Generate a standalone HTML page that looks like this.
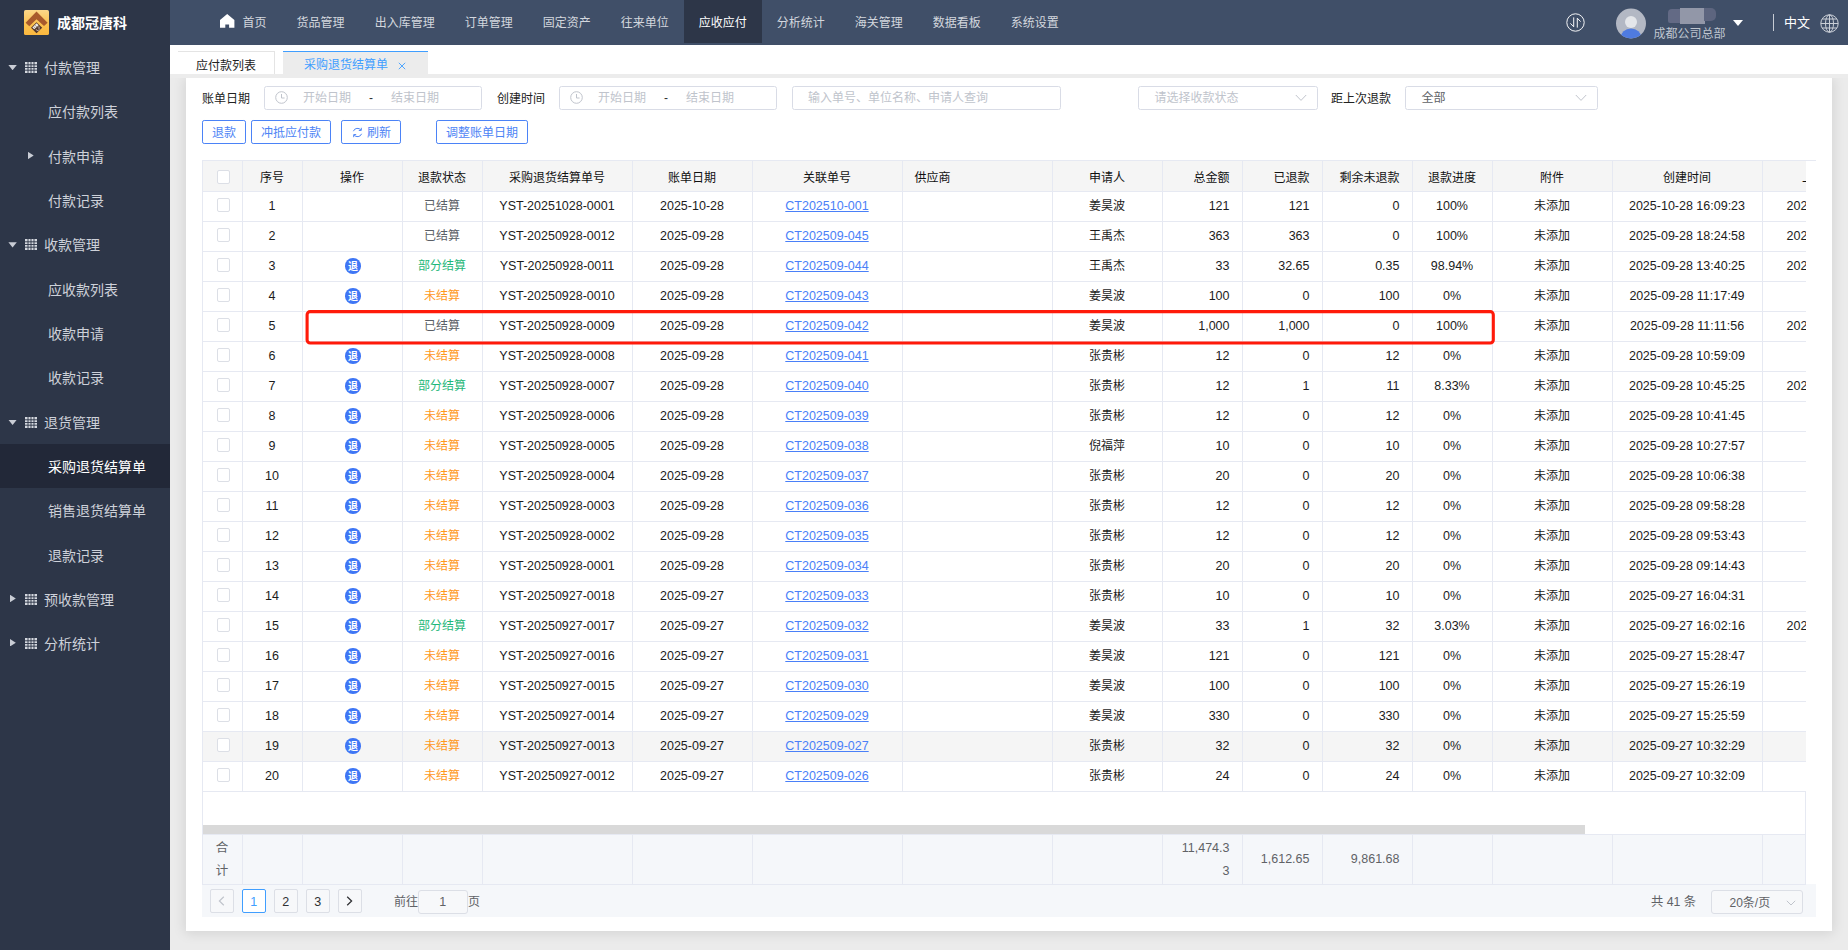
<!DOCTYPE html>
<html lang="zh-CN">
<head>
<meta charset="utf-8">
<title>采购退货结算单</title>
<style>
*{box-sizing:border-box;margin:0;padding:0}
html,body{width:1848px;height:950px;overflow:hidden;background:#ebebeb}
body{font-family:"Liberation Sans","Noto Sans CJK SC",sans-serif;font-size:12px;color:#222;position:relative}
i{font-style:normal}
.abs{position:absolute}

/* ---------- sidebar ---------- */
#side{position:absolute;left:0;top:0;width:170px;height:950px;background:#2d3648;overflow:hidden}
#logo{position:absolute;left:24px;top:9.8px;width:25px;height:25px}
#brand{position:absolute;left:57px;top:1.3px;height:45px;line-height:45px;font-size:14px;font-weight:bold;color:#fff;white-space:nowrap;letter-spacing:0}
#menu{position:absolute;left:0;top:45px;width:170px}
.mi{position:relative;height:44.33px;line-height:44.33px;font-size:14px;color:#cdd1d9;white-space:nowrap}
.mi.g .t{position:absolute;left:44px;top:1px}
.mi.s .t{position:absolute;left:48px;top:1px}
.mi.active{background:#222838;color:#fff}
.mi .grid{position:absolute;left:25px;top:17px}
.arr{position:absolute;background:#c9cdd5}
.arr.open{left:8.4px;top:20px;width:8.4px;height:5.3px;clip-path:polygon(0 0,100% 0,50% 100%)}
.arr.closed{left:10px;top:17.7px;width:5.8px;height:7.5px;clip-path:polygon(0 0,100% 50%,0 100%)}
.arr.sub.closed{left:27.9px;top:18.1px}

/* ---------- header ---------- */
#head{position:absolute;left:170px;top:0;width:1678px;height:44.5px;background:#404f68}
#nav{position:absolute;left:34.6px;top:0;height:45px;display:flex}
.ni{height:45px;line-height:47.4px;padding:0 15px;font-size:12px;color:#d3d7de;white-space:nowrap}
.ni.on{background:#2d3648;color:#fff;height:42.7px}
.ni.home{position:relative;padding-left:38px}
.ni.home svg{position:absolute;left:15.8px;top:13.9px}

/* ---------- tabs ---------- */
#tabs{position:absolute;left:170px;top:45px;width:1678px;height:29px;background:#fff;z-index:3}
#tabgap{position:absolute;left:170px;top:74px;width:1678px;height:4px;background:#ececec;z-index:3}
.tab{position:absolute;top:6px;height:23px;line-height:28px;font-size:12px;white-space:nowrap}
#tab1{left:8px;width:97px;border-top:1px solid #e4e4e4;border-right:1px solid #e4e4e4;color:#222;padding-left:18px}
#tab2{left:113px;width:145px;border-top:1.2px solid #409eff;background:#ececec;color:#409eff;padding-left:21px;line-height:27px}
#tab2 .x{position:absolute;left:115px;top:10px}

/* ---------- panel ---------- */
#panel{position:absolute;left:186px;top:78px;width:1646px;height:852.5px;background:#fff;box-shadow:0 1px 12px 1px rgba(0,0,0,.11)}
.lbl{position:absolute;height:24px;line-height:26px;font-size:12px;color:#222;white-space:nowrap}
.inp{position:absolute;height:23.5px;border:1px solid #d9dce6;border-radius:2.5px;background:#fff;font-size:12px;color:#c0c4cc;white-space:nowrap}
.inp span{position:absolute;top:0;line-height:23px}
.btn{position:absolute;top:120px;height:23.8px;line-height:24.4px;border:1px solid #4b83f7;border-radius:2.2px;color:#4d84f5;font-size:12px;text-align:center;white-space:nowrap;background:#fff}

/* ---------- table ---------- */
#twrap{position:absolute;left:202px;top:161px;width:1604px;height:631px;overflow:hidden;border-left:1px solid #e6e9f2}
#tline{position:absolute;left:202px;top:160px;width:1614px;height:1px;background:#e6e9f2}
table.tb{border-collapse:separate;border-spacing:0;table-layout:fixed;width:1710px;position:absolute;left:-0.5px;top:0}
.tb th,.tb td{height:30px;box-sizing:border-box;border-right:1px solid #e6e9f2;border-bottom:1px solid #e6e9f2;font-size:12px;font-weight:normal;white-space:nowrap;overflow:hidden;padding:0;line-height:27px;padding-top:0.5px;vertical-align:top}
.tb th{background:#f5f5f5;color:#111;height:31px;line-height:26px;padding-top:3.5px;vertical-align:top}
.tb td{color:#1c1c1c}
.tb .c{text-align:center}
.tb .l{text-align:left;padding-left:12px}
.tb .r{text-align:right;padding-right:12px}
.tb .n{font-size:12.5px}
.tb .last{text-align:left;overflow:hidden}
.tb td.last span{margin-left:24px}
.tb th.last span{margin-left:39.6px}
.tb tr.hov td{background:#f5f5f5}
.cb{display:block;width:13.5px;height:13.5px;border:1px solid #dcdfe6;border-radius:2px;background:#fff;margin:5.5px 0 0 14px}
th .cb{margin-top:5.5px}
.op{display:inline-block;width:15.6px;height:15.6px;border-radius:50%;background:#3f76f5;color:#fff;font-size:10px;line-height:17.6px;overflow:hidden;text-align:center;vertical-align:middle;position:relative;top:-0.5px;left:1px;font-weight:bold}
.st0{color:#5a5e66!important}
.st1{color:#1fb87a!important}
.st2{color:#ff991e!important}
.tb a{color:#4a80f8;text-decoration:underline}

#tbot{position:absolute;left:202px;top:792px;width:1604px;height:92px;border-left:1px solid #e6e9f2;border-right:1px solid #e6e9f2}
#sbar{position:absolute;left:203px;top:825px;width:1382px;height:9.3px;z-index:3;background:#d9d9d9}
#fwrap{z-index:2;position:absolute;left:202px;top:834px;width:1604px;height:50.5px;overflow:hidden;border-left:1px solid #e6e9f2;border-right:1px solid #e6e9f2;background:#f5f7fa}
.tb.ft td{vertical-align:middle;height:50.5px;background:#f5f7fa;color:#606266;border-bottom:1px solid #e6e9f2;border-top:1px solid #e6e9f2;line-height:23px;white-space:normal;padding-top:1px}
.tb.ft td.r{padding-right:12px}
.hj{display:inline-block;line-height:22.5px}
.wr{display:inline-block;line-height:23px;text-align:right}

/* ---------- pagination ---------- */
#pager{position:absolute;left:202px;top:884px;width:1614px;height:33px;background:#f5f7fa}
.pb{position:absolute;top:5.2px;width:23.5px;height:23.5px;border:1px solid #dcdfe6;border-radius:2px;background:#f7f8fa;text-align:center;line-height:24.5px;font-size:12.5px;color:#303133}
.pb.on{border-color:#409eff;color:#409eff;background:#fff}

#blur{filter:blur(0.7px)}
#blur i{position:absolute;top:0;height:100%}

</style>
</head>
<body>
<div id="side">
  <svg id="logo" viewBox="0 0 25 25">
    <defs><linearGradient id="lg" x1="0" y1="0" x2="0" y2="1"><stop offset="0" stop-color="#fbd78a"/><stop offset="0.55" stop-color="#fbc250"/><stop offset="1" stop-color="#fbb83f"/></linearGradient></defs>
    <rect x="0" y="0" width="25" height="25" rx="1.6" fill="url(#lg)"/>
    <path d="M12.5 1.5 L23.6 12.7 L20 16.1 L12.5 9.3 L5.3 16.2 L1.6 12.7 Z" fill="#a85a2c"/>
    <path d="M12.5 12.2 L18.2 17.7 L12.5 23.2 L7 17.7 Z" fill="#55382a"/>
    <path d="M8.3 17.4 L12.6 13.3 L14.6 15.2 L10.3 19.3 Z" fill="#f1ede8"/>
    <path d="M9.6 16.5 L11.7 18.5 M11 15.2 L13.1 17.2" stroke="#6b5a50" stroke-width="0.55"/>
    <path d="M12.2 19.2 a1.5 1.5 0 1 0 2.6 -1.2 M13.6 16.9 L15.9 17.3" stroke="#cfc4bb" stroke-width="0.8" fill="none"/>
  </svg>
  <div id="brand">成都冠唐科</div>
  <div id="menu">
<div class="mi g"><i class="arr open"></i><svg class="grid" width="12" height="11" viewBox="0 0 12 11"><rect x="0" y="0" width="12" height="11" fill="#d4d8df"/><path d="M0 2.8H12M0 5.5H12M0 8.2H12M3 0V11M6 0V11M9 0V11" stroke="#2d3548" stroke-width="0.9"/></svg><span class="t">付款管理</span></div>
<div class="mi s"><span class="t">应付款列表</span></div>
<div class="mi s"><i class="arr sub closed"></i><span class="t">付款申请</span></div>
<div class="mi s"><span class="t">付款记录</span></div>
<div class="mi g"><i class="arr open"></i><svg class="grid" width="12" height="11" viewBox="0 0 12 11"><rect x="0" y="0" width="12" height="11" fill="#d4d8df"/><path d="M0 2.8H12M0 5.5H12M0 8.2H12M3 0V11M6 0V11M9 0V11" stroke="#2d3548" stroke-width="0.9"/></svg><span class="t">收款管理</span></div>
<div class="mi s"><span class="t">应收款列表</span></div>
<div class="mi s"><span class="t">收款申请</span></div>
<div class="mi s"><span class="t">收款记录</span></div>
<div class="mi g"><i class="arr open"></i><svg class="grid" width="12" height="11" viewBox="0 0 12 11"><rect x="0" y="0" width="12" height="11" fill="#d4d8df"/><path d="M0 2.8H12M0 5.5H12M0 8.2H12M3 0V11M6 0V11M9 0V11" stroke="#2d3548" stroke-width="0.9"/></svg><span class="t">退货管理</span></div>
<div class="mi s active"><span class="t">采购退货结算单</span></div>
<div class="mi s"><span class="t">销售退货结算单</span></div>
<div class="mi s"><span class="t">退款记录</span></div>
<div class="mi g"><i class="arr closed"></i><svg class="grid" width="12" height="11" viewBox="0 0 12 11"><rect x="0" y="0" width="12" height="11" fill="#d4d8df"/><path d="M0 2.8H12M0 5.5H12M0 8.2H12M3 0V11M6 0V11M9 0V11" stroke="#2d3548" stroke-width="0.9"/></svg><span class="t">预收款管理</span></div>
<div class="mi g"><i class="arr closed"></i><svg class="grid" width="12" height="11" viewBox="0 0 12 11"><rect x="0" y="0" width="12" height="11" fill="#d4d8df"/><path d="M0 2.8H12M0 5.5H12M0 8.2H12M3 0V11M6 0V11M9 0V11" stroke="#2d3548" stroke-width="0.9"/></svg><span class="t">分析统计</span></div>
  </div>
</div>

<div id="head">
  <div id="nav">
<div class="ni home"><svg width="14.4" height="13.8" viewBox="0 0 14.4 13.8"><path d="M7.2 0 L14.4 5.9 V13.8 H9.1 V10.4 H5.3 V13.8 H0 V5.9 Z" fill="#fff"/></svg><span>首页</span></div>
<div class="ni">货品管理</div>
<div class="ni">出入库管理</div>
<div class="ni">订单管理</div>
<div class="ni">固定资产</div>
<div class="ni">往来单位</div>
<div class="ni on">应收应付</div>
<div class="ni">分析统计</div>
<div class="ni">海关管理</div>
<div class="ni">数据看板</div>
<div class="ni">系统设置</div>
  </div>
  <!-- exchange icon -->
  <svg class="abs" style="left:1395.7px;top:13.3px" width="19" height="19" viewBox="0 0 19 19">
    <circle cx="9.5" cy="9.5" r="8.7" fill="none" stroke="#fff" stroke-width="0.95"/>
    <path d="M7.7 4.4V13.8L4.4 10.4M11.3 14.6V5.2L14.6 8.6" fill="none" stroke="#fff" stroke-width="0.95"/>
  </svg>
  <!-- avatar -->
  <svg class="abs" style="left:1446px;top:7.5px" width="30" height="31" viewBox="0 0 30 31">
    <defs><clipPath id="av"><circle cx="15" cy="15.5" r="15"/></clipPath></defs>
    <circle cx="15" cy="15.5" r="15" fill="#b3b8c4"/>
    <g clip-path="url(#av)">
      <circle cx="15" cy="14" r="6" fill="#e4e6ea"/>
      <ellipse cx="15" cy="30" rx="10.5" ry="9.5" fill="#4f7be0"/>
    </g>
  </svg>
  <div class="abs" id="blur" style="left:1498px;top:7px;width:48px;height:16.5px"><i style="left:0;width:13px;background:#636a85;top:1.5px;height:14px;border-radius:4px 0 0 2px"></i><i style="left:12px;width:24.5px;background:#9297a8;top:1px;height:15.5px"></i><i style="left:36px;width:12px;background:#5d657f;top:1px;height:13px;border-radius:0 5px 5px 0"></i></div>
  <div class="abs" style="left:1483.5px;top:24px;height:20px;line-height:20px;font-size:12px;color:#bfc5cf;white-space:nowrap">成都公司总部</div>
  <i class="abs" style="left:1563px;top:20px;width:0;height:0;border-style:solid;border-width:6px 5.2px 0 5.2px;border-color:#fff transparent transparent transparent"></i>
  <i class="abs" style="left:1602.5px;top:14px;width:1px;height:17px;background:#c6cbd4"></i>
  <div class="abs" style="left:1614px;top:0;height:45px;line-height:46px;font-size:13px;color:#fff;white-space:nowrap">中文</div>
  <svg class="abs" style="left:1649.5px;top:13.5px" width="19" height="19" viewBox="0 0 19 19">
    <g fill="none" stroke="#c9ced6" stroke-width="1">
      <circle cx="9.5" cy="9.5" r="8.7"/>
      <ellipse cx="9.5" cy="9.5" rx="4" ry="8.7"/>
      <path d="M9.5 0.8V18.2M0.8 9.5H18.2M2.2 5H16.8M2.2 14H16.8"/>
    </g>
  </svg>
</div>

<div id="tabs">
  <div class="tab" id="tab1">应付款列表</div>
  <div class="tab" id="tab2">采购退货结算单<svg class="x" width="8" height="8" viewBox="0 0 8 8"><path d="M0.8 0.8L7.2 7.2M7.2 0.8L0.8 7.2" stroke="#409eff" stroke-width="0.9" fill="none"/></svg></div>
</div>

<div id="tabgap"></div>
<div id="panel"></div>

<!-- filters -->
<div class="lbl" style="left:202px;top:86px">账单日期</div>
<div class="inp" style="left:264px;top:86px;width:218px">
  <svg class="abs" style="left:10px;top:4px" width="13" height="13" viewBox="0 0 13 13"><circle cx="6.5" cy="6.5" r="5.8" fill="none" stroke="#c0c4cc" stroke-width="1"/><path d="M6.5 3V7H9.6" fill="none" stroke="#c0c4cc" stroke-width="1"/></svg>
  <span style="left:38px">开始日期</span><span style="left:104px;color:#303133">-</span><span style="left:126px">结束日期</span>
</div>
<div class="lbl" style="left:497px;top:86px">创建时间</div>
<div class="inp" style="left:559px;top:86px;width:218px">
  <svg class="abs" style="left:10px;top:4px" width="13" height="13" viewBox="0 0 13 13"><circle cx="6.5" cy="6.5" r="5.8" fill="none" stroke="#c0c4cc" stroke-width="1"/><path d="M6.5 3V7H9.6" fill="none" stroke="#c0c4cc" stroke-width="1"/></svg>
  <span style="left:38px">开始日期</span><span style="left:104px;color:#303133">-</span><span style="left:126px">结束日期</span>
</div>
<div class="inp" style="left:792px;top:86px;width:269px"><span style="left:15px">输入单号、单位名称、申请人查询</span></div>
<div class="inp" style="left:1138px;top:86px;width:179.5px"><span style="left:15.5px">请选择收款状态</span>
  <svg class="abs" style="left:156px;top:7px" width="12" height="8" viewBox="0 0 12 8"><path d="M0.8 1L6 6.4L11.2 1" fill="none" stroke="#c0c4cc" stroke-width="1"/></svg>
</div>
<div class="lbl" style="left:1331px;top:86px">距上次退款</div>
<div class="inp" style="left:1405px;top:86px;width:193px"><span style="left:15.5px;color:#606266">全部</span>
  <svg class="abs" style="left:169px;top:7px" width="12" height="8" viewBox="0 0 12 8"><path d="M0.8 1L6 6.4L11.2 1" fill="none" stroke="#c0c4cc" stroke-width="1"/></svg>
</div>

<!-- buttons -->
<div class="btn" style="left:202px;width:44px">退款</div>
<div class="btn" style="left:251px;width:80px">冲抵应付款</div>
<div class="btn" style="left:341px;width:60px;text-align:left;padding-left:25px">
  <svg class="abs" style="left:10px;top:6px" width="11" height="11" viewBox="0 0 11 11"><g fill="none" stroke="#4d84f5" stroke-width="1"><path d="M1.4 4.2A4.3 4.3 0 0 1 9 3.2"/><path d="M9.6 6.8A4.3 4.3 0 0 1 2 7.8"/><path d="M9.3 0.8V3.4H6.8"/><path d="M1.7 10.2V7.6H4.2"/></g></svg>刷新</div>
<div class="btn" style="left:436px;width:92px">调整账单日期</div>

<!-- table -->
<div id="tline"></div>
<div id="twrap">
<table class="tb">
<colgroup><col style="width:40px"><col style="width:60px"><col style="width:100px"><col style="width:80px"><col style="width:150px"><col style="width:120px"><col style="width:150px"><col style="width:150px"><col style="width:110px"><col style="width:80px"><col style="width:80px"><col style="width:90px"><col style="width:80px"><col style="width:120px"><col style="width:150px"><col style="width:150px"></colgroup>
<thead><tr>
<th class="c"><i class="cb"></i></th>
<th class="c">序号</th>
<th class="c">操作</th>
<th class="c">退款状态</th>
<th class="c">采购退货结算单号</th>
<th class="c">账单日期</th>
<th class="c">关联单号</th>
<th class="l">供应商</th>
<th class="c">申请人</th>
<th class="r">总金额</th>
<th class="r">已退款</th>
<th class="r">剩余未退款</th>
<th class="c">退款进度</th>
<th class="c">附件</th>
<th class="c">创建时间</th>
<th class="last"><span>上次退款时间</span></th>
</tr></thead><tbody>
<tr>
<td class="c"><i class="cb"></i></td>
<td class="c n">1</td>
<td class="c"></td>
<td class="c st0">已结算</td>
<td class="c n">YST-20251028-0001</td>
<td class="c n">2025-10-28</td>
<td class="c n"><a>CT202510-001</a></td>
<td class="l"></td>
<td class="c">姜昊波</td>
<td class="r n">121</td>
<td class="r n">121</td>
<td class="r n">0</td>
<td class="c n">100%</td>
<td class="c">未添加</td>
<td class="c n">2025-10-28 16:09:23</td>
<td class="last n"><span>2025-10-28 16:09:40</span></td>
</tr>
<tr>
<td class="c"><i class="cb"></i></td>
<td class="c n">2</td>
<td class="c"></td>
<td class="c st0">已结算</td>
<td class="c n">YST-20250928-0012</td>
<td class="c n">2025-09-28</td>
<td class="c n"><a>CT202509-045</a></td>
<td class="l"></td>
<td class="c">王禹杰</td>
<td class="r n">363</td>
<td class="r n">363</td>
<td class="r n">0</td>
<td class="c n">100%</td>
<td class="c">未添加</td>
<td class="c n">2025-09-28 18:24:58</td>
<td class="last n"><span>2025-09-28 18:25:20</span></td>
</tr>
<tr>
<td class="c"><i class="cb"></i></td>
<td class="c n">3</td>
<td class="c"><i class="op">退</i></td>
<td class="c st1">部分结算</td>
<td class="c n">YST-20250928-0011</td>
<td class="c n">2025-09-28</td>
<td class="c n"><a>CT202509-044</a></td>
<td class="l"></td>
<td class="c">王禹杰</td>
<td class="r n">33</td>
<td class="r n">32.65</td>
<td class="r n">0.35</td>
<td class="c n">98.94%</td>
<td class="c">未添加</td>
<td class="c n">2025-09-28 13:40:25</td>
<td class="last n"><span>2025-09-28 13:41:02</span></td>
</tr>
<tr>
<td class="c"><i class="cb"></i></td>
<td class="c n">4</td>
<td class="c"><i class="op">退</i></td>
<td class="c st2">未结算</td>
<td class="c n">YST-20250928-0010</td>
<td class="c n">2025-09-28</td>
<td class="c n"><a>CT202509-043</a></td>
<td class="l"></td>
<td class="c">姜昊波</td>
<td class="r n">100</td>
<td class="r n">0</td>
<td class="r n">100</td>
<td class="c n">0%</td>
<td class="c">未添加</td>
<td class="c n">2025-09-28 11:17:49</td>
<td class="last n"><span></span></td>
</tr>
<tr>
<td class="c"><i class="cb"></i></td>
<td class="c n">5</td>
<td class="c"></td>
<td class="c st0">已结算</td>
<td class="c n">YST-20250928-0009</td>
<td class="c n">2025-09-28</td>
<td class="c n"><a>CT202509-042</a></td>
<td class="l"></td>
<td class="c">姜昊波</td>
<td class="r n">1,000</td>
<td class="r n">1,000</td>
<td class="r n">0</td>
<td class="c n">100%</td>
<td class="c">未添加</td>
<td class="c n">2025-09-28 11:11:56</td>
<td class="last n"><span>2025-09-28 11:12:30</span></td>
</tr>
<tr>
<td class="c"><i class="cb"></i></td>
<td class="c n">6</td>
<td class="c"><i class="op">退</i></td>
<td class="c st2">未结算</td>
<td class="c n">YST-20250928-0008</td>
<td class="c n">2025-09-28</td>
<td class="c n"><a>CT202509-041</a></td>
<td class="l"></td>
<td class="c">张贵彬</td>
<td class="r n">12</td>
<td class="r n">0</td>
<td class="r n">12</td>
<td class="c n">0%</td>
<td class="c">未添加</td>
<td class="c n">2025-09-28 10:59:09</td>
<td class="last n"><span></span></td>
</tr>
<tr>
<td class="c"><i class="cb"></i></td>
<td class="c n">7</td>
<td class="c"><i class="op">退</i></td>
<td class="c st1">部分结算</td>
<td class="c n">YST-20250928-0007</td>
<td class="c n">2025-09-28</td>
<td class="c n"><a>CT202509-040</a></td>
<td class="l"></td>
<td class="c">张贵彬</td>
<td class="r n">12</td>
<td class="r n">1</td>
<td class="r n">11</td>
<td class="c n">8.33%</td>
<td class="c">未添加</td>
<td class="c n">2025-09-28 10:45:25</td>
<td class="last n"><span>2025-09-28 10:46:01</span></td>
</tr>
<tr>
<td class="c"><i class="cb"></i></td>
<td class="c n">8</td>
<td class="c"><i class="op">退</i></td>
<td class="c st2">未结算</td>
<td class="c n">YST-20250928-0006</td>
<td class="c n">2025-09-28</td>
<td class="c n"><a>CT202509-039</a></td>
<td class="l"></td>
<td class="c">张贵彬</td>
<td class="r n">12</td>
<td class="r n">0</td>
<td class="r n">12</td>
<td class="c n">0%</td>
<td class="c">未添加</td>
<td class="c n">2025-09-28 10:41:45</td>
<td class="last n"><span></span></td>
</tr>
<tr>
<td class="c"><i class="cb"></i></td>
<td class="c n">9</td>
<td class="c"><i class="op">退</i></td>
<td class="c st2">未结算</td>
<td class="c n">YST-20250928-0005</td>
<td class="c n">2025-09-28</td>
<td class="c n"><a>CT202509-038</a></td>
<td class="l"></td>
<td class="c">倪福萍</td>
<td class="r n">10</td>
<td class="r n">0</td>
<td class="r n">10</td>
<td class="c n">0%</td>
<td class="c">未添加</td>
<td class="c n">2025-09-28 10:27:57</td>
<td class="last n"><span></span></td>
</tr>
<tr>
<td class="c"><i class="cb"></i></td>
<td class="c n">10</td>
<td class="c"><i class="op">退</i></td>
<td class="c st2">未结算</td>
<td class="c n">YST-20250928-0004</td>
<td class="c n">2025-09-28</td>
<td class="c n"><a>CT202509-037</a></td>
<td class="l"></td>
<td class="c">张贵彬</td>
<td class="r n">20</td>
<td class="r n">0</td>
<td class="r n">20</td>
<td class="c n">0%</td>
<td class="c">未添加</td>
<td class="c n">2025-09-28 10:06:38</td>
<td class="last n"><span></span></td>
</tr>
<tr>
<td class="c"><i class="cb"></i></td>
<td class="c n">11</td>
<td class="c"><i class="op">退</i></td>
<td class="c st2">未结算</td>
<td class="c n">YST-20250928-0003</td>
<td class="c n">2025-09-28</td>
<td class="c n"><a>CT202509-036</a></td>
<td class="l"></td>
<td class="c">张贵彬</td>
<td class="r n">12</td>
<td class="r n">0</td>
<td class="r n">12</td>
<td class="c n">0%</td>
<td class="c">未添加</td>
<td class="c n">2025-09-28 09:58:28</td>
<td class="last n"><span></span></td>
</tr>
<tr>
<td class="c"><i class="cb"></i></td>
<td class="c n">12</td>
<td class="c"><i class="op">退</i></td>
<td class="c st2">未结算</td>
<td class="c n">YST-20250928-0002</td>
<td class="c n">2025-09-28</td>
<td class="c n"><a>CT202509-035</a></td>
<td class="l"></td>
<td class="c">张贵彬</td>
<td class="r n">12</td>
<td class="r n">0</td>
<td class="r n">12</td>
<td class="c n">0%</td>
<td class="c">未添加</td>
<td class="c n">2025-09-28 09:53:43</td>
<td class="last n"><span></span></td>
</tr>
<tr>
<td class="c"><i class="cb"></i></td>
<td class="c n">13</td>
<td class="c"><i class="op">退</i></td>
<td class="c st2">未结算</td>
<td class="c n">YST-20250928-0001</td>
<td class="c n">2025-09-28</td>
<td class="c n"><a>CT202509-034</a></td>
<td class="l"></td>
<td class="c">张贵彬</td>
<td class="r n">20</td>
<td class="r n">0</td>
<td class="r n">20</td>
<td class="c n">0%</td>
<td class="c">未添加</td>
<td class="c n">2025-09-28 09:14:43</td>
<td class="last n"><span></span></td>
</tr>
<tr>
<td class="c"><i class="cb"></i></td>
<td class="c n">14</td>
<td class="c"><i class="op">退</i></td>
<td class="c st2">未结算</td>
<td class="c n">YST-20250927-0018</td>
<td class="c n">2025-09-27</td>
<td class="c n"><a>CT202509-033</a></td>
<td class="l"></td>
<td class="c">张贵彬</td>
<td class="r n">10</td>
<td class="r n">0</td>
<td class="r n">10</td>
<td class="c n">0%</td>
<td class="c">未添加</td>
<td class="c n">2025-09-27 16:04:31</td>
<td class="last n"><span></span></td>
</tr>
<tr>
<td class="c"><i class="cb"></i></td>
<td class="c n">15</td>
<td class="c"><i class="op">退</i></td>
<td class="c st1">部分结算</td>
<td class="c n">YST-20250927-0017</td>
<td class="c n">2025-09-27</td>
<td class="c n"><a>CT202509-032</a></td>
<td class="l"></td>
<td class="c">姜昊波</td>
<td class="r n">33</td>
<td class="r n">1</td>
<td class="r n">32</td>
<td class="c n">3.03%</td>
<td class="c">未添加</td>
<td class="c n">2025-09-27 16:02:16</td>
<td class="last n"><span>2025-09-27 16:03:00</span></td>
</tr>
<tr>
<td class="c"><i class="cb"></i></td>
<td class="c n">16</td>
<td class="c"><i class="op">退</i></td>
<td class="c st2">未结算</td>
<td class="c n">YST-20250927-0016</td>
<td class="c n">2025-09-27</td>
<td class="c n"><a>CT202509-031</a></td>
<td class="l"></td>
<td class="c">姜昊波</td>
<td class="r n">121</td>
<td class="r n">0</td>
<td class="r n">121</td>
<td class="c n">0%</td>
<td class="c">未添加</td>
<td class="c n">2025-09-27 15:28:47</td>
<td class="last n"><span></span></td>
</tr>
<tr>
<td class="c"><i class="cb"></i></td>
<td class="c n">17</td>
<td class="c"><i class="op">退</i></td>
<td class="c st2">未结算</td>
<td class="c n">YST-20250927-0015</td>
<td class="c n">2025-09-27</td>
<td class="c n"><a>CT202509-030</a></td>
<td class="l"></td>
<td class="c">姜昊波</td>
<td class="r n">100</td>
<td class="r n">0</td>
<td class="r n">100</td>
<td class="c n">0%</td>
<td class="c">未添加</td>
<td class="c n">2025-09-27 15:26:19</td>
<td class="last n"><span></span></td>
</tr>
<tr>
<td class="c"><i class="cb"></i></td>
<td class="c n">18</td>
<td class="c"><i class="op">退</i></td>
<td class="c st2">未结算</td>
<td class="c n">YST-20250927-0014</td>
<td class="c n">2025-09-27</td>
<td class="c n"><a>CT202509-029</a></td>
<td class="l"></td>
<td class="c">姜昊波</td>
<td class="r n">330</td>
<td class="r n">0</td>
<td class="r n">330</td>
<td class="c n">0%</td>
<td class="c">未添加</td>
<td class="c n">2025-09-27 15:25:59</td>
<td class="last n"><span></span></td>
</tr>
<tr class="hov">
<td class="c"><i class="cb"></i></td>
<td class="c n">19</td>
<td class="c"><i class="op">退</i></td>
<td class="c st2">未结算</td>
<td class="c n">YST-20250927-0013</td>
<td class="c n">2025-09-27</td>
<td class="c n"><a>CT202509-027</a></td>
<td class="l"></td>
<td class="c">张贵彬</td>
<td class="r n">32</td>
<td class="r n">0</td>
<td class="r n">32</td>
<td class="c n">0%</td>
<td class="c">未添加</td>
<td class="c n">2025-09-27 10:32:29</td>
<td class="last n"><span></span></td>
</tr>
<tr>
<td class="c"><i class="cb"></i></td>
<td class="c n">20</td>
<td class="c"><i class="op">退</i></td>
<td class="c st2">未结算</td>
<td class="c n">YST-20250927-0012</td>
<td class="c n">2025-09-27</td>
<td class="c n"><a>CT202509-026</a></td>
<td class="l"></td>
<td class="c">张贵彬</td>
<td class="r n">24</td>
<td class="r n">0</td>
<td class="r n">24</td>
<td class="c n">0%</td>
<td class="c">未添加</td>
<td class="c n">2025-09-27 10:32:09</td>
<td class="last n"><span></span></td>
</tr>
</tbody></table>
</div>
<div id="tbot"></div>
<div id="sbar"></div>
<div id="fwrap">
<table class="tb ft">
<colgroup><col style="width:40px"><col style="width:60px"><col style="width:100px"><col style="width:80px"><col style="width:150px"><col style="width:120px"><col style="width:150px"><col style="width:150px"><col style="width:110px"><col style="width:80px"><col style="width:80px"><col style="width:90px"><col style="width:80px"><col style="width:120px"><col style="width:150px"><col style="width:150px"></colgroup>
<tbody><tr>
<td class="c n"><span class="hj">合<br>计</span></td>
<td class="c n"></td>
<td class="c n"></td>
<td class="c n"></td>
<td class="c n"></td>
<td class="c n"></td>
<td class="c n"></td>
<td class="l n"></td>
<td class="c n"></td>
<td class="r n"><span class="wr">11,474.3<br>3</span></td>
<td class="r n">1,612.65</td>
<td class="r n">9,861.68</td>
<td class="c n"></td>
<td class="c n"></td>
<td class="c n"></td>
<td class="c n"></td>
</tr></tbody></table>
</div>

<!-- red highlight -->
<svg class="abs" style="left:300px;top:305px" width="1200" height="45" viewBox="0 0 1200 45"><rect x="7.1" y="6.65" width="1186.2" height="31.4" rx="3" ry="3" fill="none" stroke="#ff1a0a" stroke-width="3.1"/></svg>

<!-- pagination -->
<div id="pager">
  <div class="pb" style="left:8px;color:#c0c4cc"><svg width="7" height="10" viewBox="0 0 7 10" style="position:relative;top:-0.4px"><path d="M5.8 0.8L1.4 5L5.8 9.2" fill="none" stroke="#c0c4cc" stroke-width="1.2"/></svg></div>
  <div class="pb on" style="left:40px">1</div>
  <div class="pb" style="left:72px">2</div>
  <div class="pb" style="left:104px">3</div>
  <div class="pb" style="left:136px"><svg width="7" height="10" viewBox="0 0 7 10" style="position:relative;top:-0.4px"><path d="M1.2 0.8L5.6 5L1.2 9.2" fill="none" stroke="#303133" stroke-width="1.25"/></svg></div>
  <div class="abs" style="left:192px;top:0;height:33px;line-height:37px;font-size:12px;color:#606266;white-space:nowrap">前往</div>
  <div class="abs" style="left:215.8px;top:6px;width:49.8px;height:23.7px;border:1px solid #dcdfe6;border-radius:3px;background:#f7f8fa;text-align:center;line-height:22px;font-size:12.5px;color:#606266">1</div>
  <div class="abs" style="left:266px;top:0;height:33px;line-height:37px;font-size:12px;color:#606266;white-space:nowrap">页</div>
  <div class="abs" style="left:1449px;top:0;height:33px;line-height:37.4px;font-size:12.3px;color:#606266;white-space:nowrap">共 41 条</div>
  <div class="abs" style="left:1509px;top:6px;width:91.5px;height:23.7px;border:1px solid #dcdfe6;border-radius:3px;background:#f7f8fa;line-height:24.4px;font-size:12px;color:#606266;padding-left:17.5px;white-space:nowrap">20条/页
    <svg class="abs" style="left:74px;top:9px" width="10" height="6" viewBox="0 0 10 6"><path d="M0.8 0.8L5 5L9.2 0.8" fill="none" stroke="#c0c4cc" stroke-width="1"/></svg>
  </div>
</div>

</body>
</html>
